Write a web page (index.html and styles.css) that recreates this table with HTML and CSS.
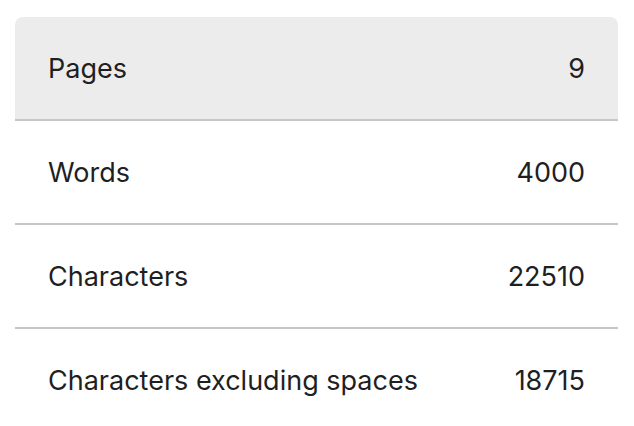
FILE: index.html
```html
<!DOCTYPE html>
<html>
<head>
<meta charset="utf-8">
<link rel="stylesheet" href="styles.css">
</head>
<body>
<div class="card">
  <div class="row head"><span class="label">Pages</span><span class="value">9</span></div>
  <div class="row"><span class="label">Words</span><span class="value">4000</span></div>
  <div class="row"><span class="label">Characters</span><span class="value">22510</span></div>
  <div class="row last"><span class="label">Characters excluding spaces</span><span class="value">18715</span></div>
</div>
</body>
</html>
```
FILE: styles.css
```css
html, body {
  margin: 0;
  background: #ffffff;
}
body {
  padding: 17px 16px 0 15px;
  font-family: Inter, Roboto, "Liberation Sans", sans-serif;
  color: #1f1f1f;
}
.card {
  display: flex;
  flex-direction: column;
}
.row {
  height: 102px;
  display: flex;
  align-items: center;
  justify-content: space-between;
  padding: 0 33px;
  border-bottom: 2px solid #c7c7c7;
  font-size: 27px;
}
.row.head {
  background: #ececec;
  border-radius: 8px 8px 0 0;
}
.row.last {
  border-bottom: none;
}
```
